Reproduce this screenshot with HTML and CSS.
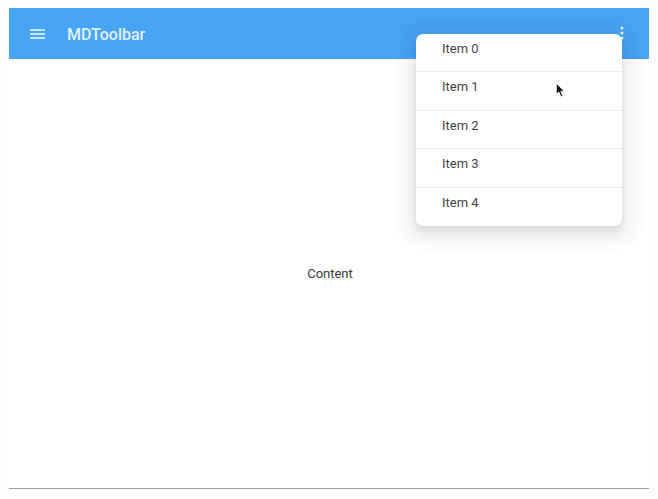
FILE: index.html
```html
<!DOCTYPE html>
<html lang="en">
<head>
<meta charset="utf-8">
<title>MDToolbar</title>
<link rel="stylesheet" href="styles.css">
</head>
<body>
<div class="window">
  <header class="toolbar">
    <svg class="menu-icon" width="15" height="10" viewBox="0 0 15 10" aria-hidden="true"><path d="M0 1h15M0 5h15M0 9h15" stroke="#f4faff" stroke-width="1.5" fill="none"/></svg>
    <span class="title">MDToolbar</span>
    <svg class="more-icon" width="4" height="14" viewBox="0 0 4 14" aria-hidden="true"><circle cx="2" cy="2" r="1.6" fill="#e8f4ff"/><circle cx="2" cy="7" r="1.6" fill="#e8f4ff"/><circle cx="2" cy="12" r="1.6" fill="#e8f4ff"/></svg>
  </header>
  <main class="content">Content</main>
  <ul class="menu">
    <li class="item">Item 0</li>
    <li class="item">Item 1</li>
    <li class="item">Item 2</li>
    <li class="item">Item 3</li>
    <li class="item">Item 4</li>
  </ul>
  <svg class="cursor" width="10" height="15" viewBox="0 0 10 15" aria-hidden="true"><path d="M0.5 0.5V11L3 8.8 4.8 13.5 6.6 12.8 4.8 8.2H8Z" fill="#111" stroke="#fff" stroke-width="0.6"/></svg>
</div>
</body>
</html>
```
FILE: styles.css
```css
html, body {
  margin: 0;
  height: 100%;
  background: #fcfcfc;
}
body {
  padding: 8px 9px 0;
  box-sizing: border-box;
  font-family: Roboto, "Liberation Sans", sans-serif;
}
.window {
  position: relative;
  width: 640px;
  height: 481px;
  background: #fff;
  border-bottom: 1px solid #a0a0a0;
  box-sizing: border-box;
  display: flex;
  flex-direction: column;
  overflow: hidden;
}
.toolbar {
  flex: none;
  height: 51px;
  background: #48a5f6;
  display: flex;
  align-items: center;
  padding: 0 25px 0 21px;
  color: #fff;
}
.menu-icon {
  flex: none;
  margin-top: 1px;
}
.title {
  margin-left: 22px;
  padding-top: 2px;
  font-size: 16px;
  font-weight: 500;
  color: #e4f2fe;
  flex: 1;
}
.more-icon {
  flex: none;
  margin-top: -2px;
}
.content {
  flex: 1;
  display: flex;
  justify-content: center;
  padding-top: 207px;
  padding-left: 2px;
  font-size: 13px;
  color: #3a3a3a;
  background: #fff;
}
.menu {
  position: absolute;
  left: 407px;
  top: 26px;
  width: 206px;
  margin: 0;
  padding: 0;
  list-style: none;
  background: #fff;
  border-radius: 7px;
  box-shadow: 0 5px 10px rgba(0, 0, 0, .13), 0 3px 12px 17px rgba(0, 0, 0, .04);
  overflow: hidden;
}
.item {
  height: 38.4px;
  box-sizing: border-box;
  padding: 7px 0 0 26px;
  font-size: 13px;
  line-height: 15px;
  color: #444;
  border-bottom: 1px solid #ededed;
}
.item:last-child {
  border-bottom: none;
}
.cursor {
  position: absolute;
  left: 547px;
  top: 75px;
}
```
